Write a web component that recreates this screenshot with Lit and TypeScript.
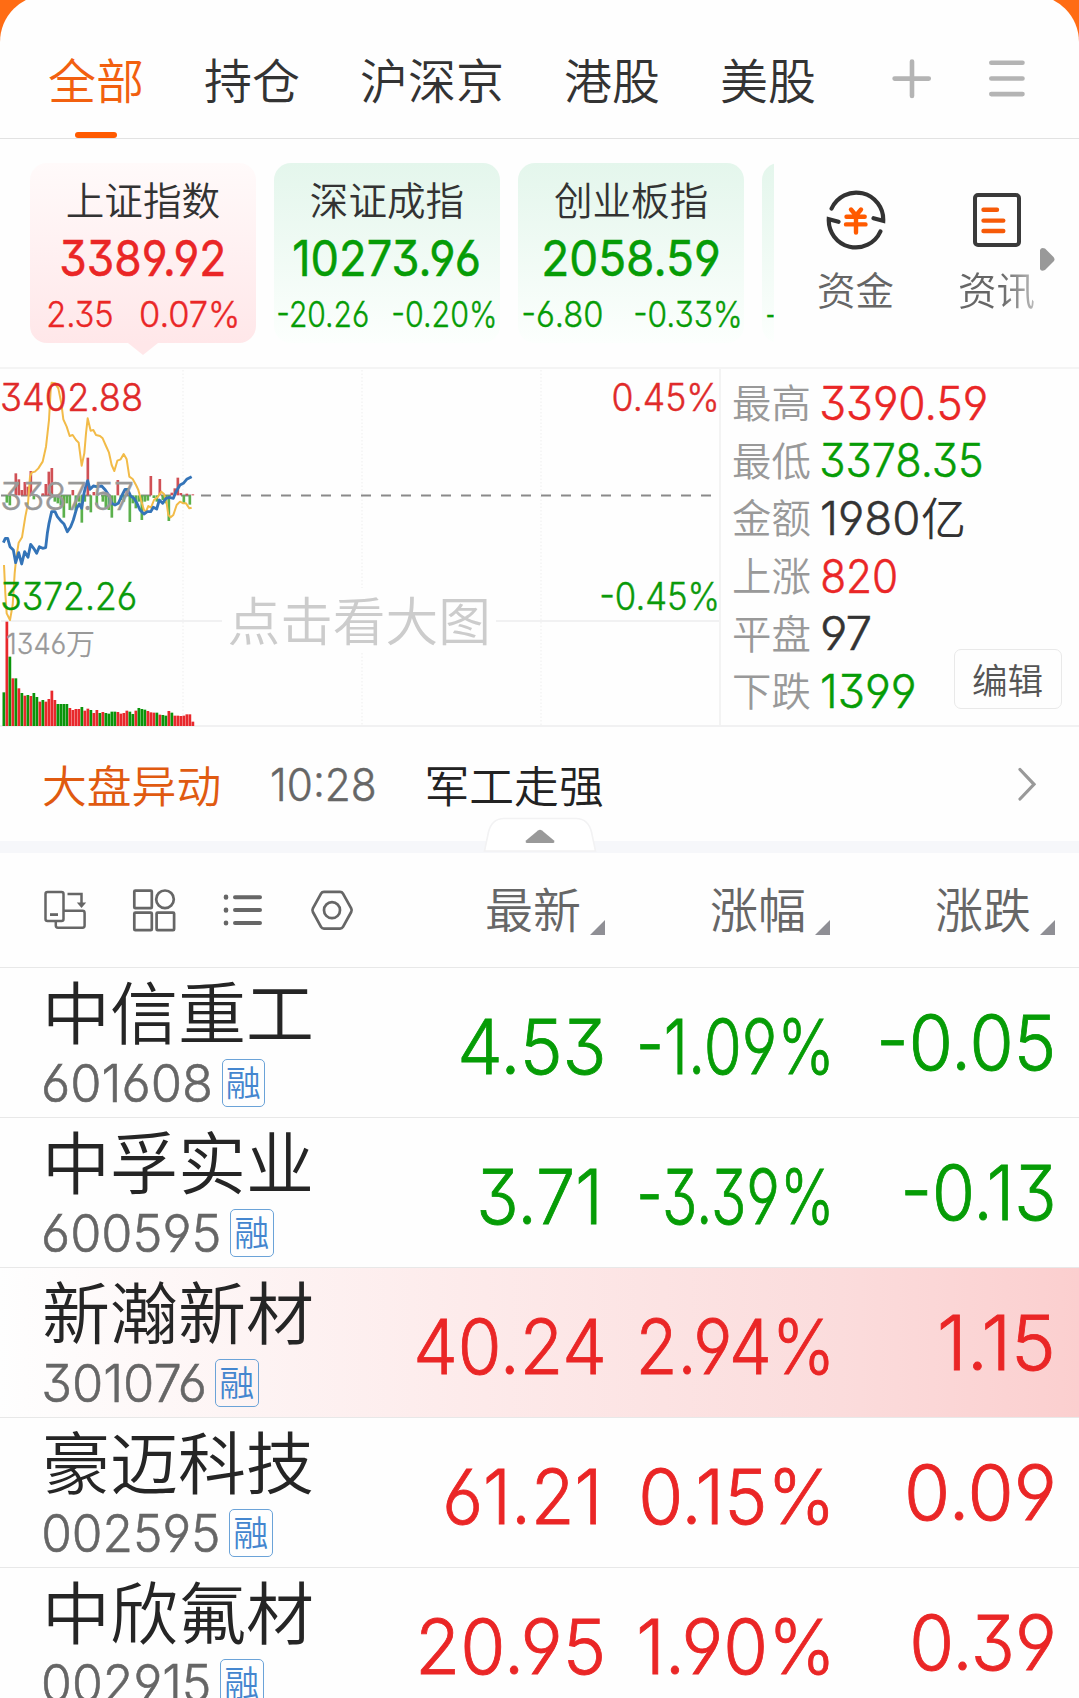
import { LitElement, html, svg, css } from "lit";
import { customElement, property } from "lit/decorators.js";
import { classMap } from "lit/directives/class-map.js";

const DIGIT_FONT = 'Inter, "Noto Sans CJK SC", sans-serif';
const DIGIT_RATIO = 0.727;

let ctx: CanvasRenderingContext2D | null = null;
function measure(text: string, size: number, weight: number) {
  if (!ctx) ctx = document.createElement("canvas").getContext("2d");
  ctx!.font = `${weight} ${size}px ${DIGIT_FONT}`;
  const m = ctx!.measureText(text);
  return { left: m.actualBoundingBoxLeft, ink: m.actualBoundingBoxLeft + m.actualBoundingBoxRight, advance: m.width };
}

/** Figures set to an exact ink width; `h` is the height of a digit. A thin outline gives the in-between weight. */
function figure(text: string, x: number, base: number, w: number, h: number, weight = 300, fill = "currentColor") {
  const size = h / DIGIT_RATIO;
  const m = measure(text, size, weight);
  const s = w / m.ink;
  return svg`<text class="fig" x=${x + m.left * s} y=${base} textLength=${m.advance * s}
    lengthAdjust="spacingAndGlyphs" font-size=${size} font-weight=${weight} fill=${fill}
    stroke=${fill} stroke-width=${size * 0.011}>${text}</text>`;
}

const figStyles = css`
  .fig {
    font-family: Inter, "Noto Sans CJK SC", sans-serif;
    font-feature-settings: "cv03", "cv04", "cv09";
  }
`;

const RED = "#e02a2a";
const GREEN = "#0a9a0a";

@customElement("fit-figure")
class FitFigure extends LitElement {
  @property() text = "";
  @property({ type: Number }) w = 0;
  @property({ type: Number }) h = 0;
  @property({ type: Number }) weight = 300;

  static styles = [
    figStyles,
    css`
      :host { display: block; flex: none; }
      svg { display: block; overflow: visible; }
    `,
  ];

  render() {
    return html`<svg width=${this.w} height=${this.h}>
      ${figure(this.text, 0, this.h, this.w, this.h, this.weight)}
    </svg>`;
  }
}

interface Index {
  name: string;
  value: string; vw: number;
  diff: string; dw: number;
  pct: string; pw: number;
  up?: boolean;
}

const INDICES: Index[] = [
  { name: "上证指数", value: "3389.92", vw: 163, diff: "2.35", dw: 64, pct: "0.07%", pw: 96.5, up: true },
  { name: "深证成指", value: "10273.96", vw: 185, diff: "-20.26", dw: 89.5, pct: "-0.20%", pw: 102 },
  { name: "创业板指", value: "2058.59", vw: 174.5, diff: "-6.80", dw: 79, pct: "-0.33%", pw: 105 },
];

const STATS = [
  { label: "最高", value: "3390.59", w: 163.5, tone: "up" },
  { label: "最低", value: "3378.35", w: 159.5, tone: "down" },
  { label: "金额", value: "1980", w: 96, tone: "flat", unit: "亿" },
  { label: "上涨", value: "820", w: 74, tone: "up" },
  { label: "平盘", value: "97", w: 48.5, tone: "flat" },
  { label: "下跌", value: "1399", w: 92, tone: "down" },
];

const STOCKS = [
  { name: "中信重工", code: "601608", cw: 166.5, price: "4.53", w: 141, pct: "-1.09%", pw: 188.5, chg: "-0.05", gw: 171.5 },
  { name: "中孚实业", code: "600595", cw: 175, price: "3.71", w: 115.5, pct: "-3.39%", pw: 188.5, chg: "-0.13", gw: 147 },
  { name: "新瀚新材", code: "301076", cw: 160, price: "40.24", w: 185.5, pct: "2.94%", pw: 187.5, chg: "1.15", gw: 111, up: true, flash: true },
  { name: "豪迈科技", code: "002595", cw: 174, price: "61.21", w: 150, pct: "0.15%", pw: 186, chg: "0.09", gw: 144.5, up: true },
  { name: "中欣氟材", code: "002915", cw: 165, price: "20.95", w: 181.5, pct: "1.90%", pw: 188.5, chg: "0.39", gw: 139.5, up: true },
];

/* Intraday series, in thirds of a pixel from the top left of the chart. */
const VOL_TOPS = [
  997, 785, 890, 955, 955, 985, 999, 1007, 1005, 1008, 999, 1011, 1025, 1020, 1025, 1017, 992, 1020, 1032, 1032, 1032,
  1032, 1044, 1050, 1047, 1047, 1041, 1052, 1046, 1050, 1059, 1050, 1059, 1056, 1059, 1061, 1055, 1055, 1056, 1061,
  1059, 1052, 1055, 1062, 1052, 1044, 1047, 1049, 1053, 1057, 1058, 1058, 1064, 1065, 1067, 1053, 1058, 1067, 1067,
  1068, 1067, 1063, 1063, 1085,
];
const VOL_SIDE = "grgrgrgrgrggrgrrrrggggrrrrgrrgrrgrggggrrrrggrgggrrrgrggrgrrrrrrr";

const MOMENTUM: [number, number][] = [
  [1, 428], [2, 436], [4, 340], [5, 358], [6, 390], [7, 366], [8, 380], [9, 333], [10, 418], [13, 400], [14, 372],
  [15, 335], [16, 324], [17, 425], [18, 430], [19, 437], [20, 473], [21, 430], [22, 450], [23, 390], [24, 452],
  [25, 425], [26, 488], [27, 425], [28, 293], [29, 457], [30, 396], [31, 435], [33, 425], [34, 447], [35, 450],
  [36, 473], [37, 430], [38, 360], [39, 420], [40, 425], [41, 385], [42, 486], [43, 430], [44, 445], [45, 425],
  [46, 480], [47, 425], [48, 422], [49, 348], [50, 414], [51, 425], [52, 357], [53, 420], [54, 430], [55, 483],
  [56, 398], [57, 385], [58, 353], [59, 399], [60, 432], [61, 401], [62, 434], [63, 403],
];

const AVG_LINE =
  "12,615 16,700 20,760 30,780 38,735 44,640 48,600 56,548 66,532 76,470 84,430 90,350 95,338 105,335 115,325 128,305 138,260 147,180 152,90 155,68 165,70 175,85 184,130 190,178 200,200 209,228 218,225 228,240 236,248 245,317 253,280 258,220 263,175 272,212 280,210 288,225 300,228 308,235 318,258 327,278 335,315 343,333 352,302 362,298 371,282 380,298 388,350 398,357 408,375 415,390 423,420 432,450 438,455 445,438 453,443 462,420 474,410 484,395 492,402 500,430 505,465 512,472 520,465 530,435 540,425 550,430 558,430 568,445 575,443";
const PRICE_LINE =
  "10,548 16,535 23,535 30,560 40,570 47,608 56,578 65,612 74,575 84,592 92,553 101,565 110,580 118,560 128,565 137,563 142,520 147,490 155,455 165,455 172,470 182,482 192,492 202,515 212,500 220,480 230,445 238,432 245,445 252,400 258,375 263,362 270,388 280,378 290,380 305,378 316,390 326,405 335,430 345,435 355,430 365,408 375,388 383,388 392,408 402,415 410,428 420,450 432,462 442,455 452,455 460,442 470,447 478,420 488,430 498,415 508,412 520,415 528,395 540,375 550,370 560,358 575,350";

@customElement("trend-chart")
class TrendChart extends LitElement {
  static styles = [
    figStyles,
    css`
      :host { display: block; width: 719px; flex: none; }
      svg { display: block; overflow: visible; }
      .cjk { font-family: "Noto Sans CJK SC", sans-serif; font-weight: 350; }
    `,
  ];

  render() {
    return html`<svg width="719" height="356" viewBox="0 369 719 356">
      <g fill="none" stroke="#f1f1f2" stroke-width="2">
        <path d="M1 621H222M496 621H720" />
        <path d="M183 370V725M362 370V588M362 653V725M541 370V725" stroke="#f3f3f3" stroke-width="1.4" stroke-dasharray="1.5 2" />
      </g>
      <path d="M1 495.5H715" stroke="#8a8a8a" stroke-width="2" stroke-dasharray="10 10" />
      <g transform="translate(0 360) scale(0.33333)">
        ${MOMENTUM.map(([i, y]) =>
          y < 406
            ? svg`<rect x=${7.5 + 9 * i} y=${y} width="8" height=${406 - y} fill="#d05055" />`
            : svg`<rect x=${7.5 + 9 * i} y="406" width="8" height=${y - 406} fill="#5bb04c" />`,
        )}
        ${VOL_TOPS.map(
          (y, i) =>
            svg`<rect x=${7.5 + 9 * i} y=${y} width="8.2" height=${1098 - y} fill=${VOL_SIDE[i] === "r" ? "#e8282c" : "#0a940a"} />`,
        )}
        <polyline points=${AVG_LINE} fill="none" stroke="#f2bb48" stroke-width="6" stroke-linejoin="round" />
        <polyline points=${PRICE_LINE} fill="none" stroke="#3474b8" stroke-width="8.5" stroke-linejoin="round" />
      </g>
      ${figure("3402.88", 2, 411, 139, 27.5, 300, RED)}
      ${figure("0.45%", 613.5, 411, 103, 27.5, 300, RED)}
      ${figure("3387.57", 2, 510, 131, 27.5, 300, "#999")}
      ${figure("3372.26", 2, 610, 133.5, 27.5, 300, GREEN)}
      ${figure("-0.45%", 601, 610, 116, 27.5, 300, GREEN)}
      ${figure("1346", 7, 654, 58, 21, 300, "#999")}
      <text class="cjk" x="66" y="654.5" font-size="29" fill="#999">万</text>
      <text class="cjk" x="227.5" y="641" font-size="52.7" fill="#ccc">点击看大图</text>
    </svg>`;
  }
}

@customElement("app-root")
class AppRoot extends LitElement {
  static styles = css`
    :host {
      display: block;
      width: 1079px;
      height: 1698px;
      overflow: hidden;
      background: #ff6c14;
      font-family: "Noto Sans CJK SC", sans-serif;
      font-weight: 350;
      color: #333;
    }
    * { box-sizing: border-box; }
    svg { display: block; flex: none; }
    .page {
      margin-top: -5px;
      padding-top: 5px;
      height: 1703px;
      background: #fefefe;
      border-radius: 47px 47px 0 0;
      overflow: hidden;
    }
    .up { color: #ea2626; }
    .down { color: #069c06; }
    .flat { color: #333; }

    .tabs { display: flex; height: 139px; border-bottom: 1px solid #e2e2e2; padding-left: 48px; }
    .names { display: flex; gap: 60px; font-size: 48px; line-height: 157px; }
    .tab { height: 138px; display: flex; flex-direction: column; align-items: center; }
    .tab.on { color: #f2600f; }
    .tab.on::after { content: ""; width: 42px; height: 6px; border-radius: 3px; background: #ff5a00; margin-top: -25px; flex: none; }
    .add { margin: 57px 0 0 73.5px; }
    .menu { margin: 57px 0 0 53px; }

    .indices { display: flex; height: 230px; padding: 24px 0 0 30px; border-bottom: 2px solid #f4f4f4; }
    .cards { display: flex; gap: 18.3px; width: 744px; overflow: hidden; }
    .card { flex: none; width: 225.8px; height: 180px; border-radius: 17px; background: linear-gradient(#e4f6ec, #fcfffd); display: flex; flex-direction: column; align-items: center; }
    .cell { flex: none; display: flex; flex-direction: column; align-items: center; height: 193px; }
    .cell.hot .card { background: linear-gradient(#fffafa, #ffe7e9); }
    .cell.hot::after { content: ""; border: solid transparent; border-width: 12px 15px 0; border-top-color: #ffe7e9; }
    .title { font-size: 38.6px; line-height: 71px; color: #333; height: 77px; }
    .pair { display: flex; justify-content: space-between; width: 219px; margin-top: 25px; padding: 0 1px 0 1px; }
    .hot .pair { width: 189px; padding: 0; }
    .quick { display: flex; padding-left: 43px; gap: 64px; }
    .link { display: flex; flex-direction: column; align-items: center; width: 77px; font-size: 38.5px; line-height: 56px; color: #666; padding-top: 26px; }
    .link svg { margin-bottom: 9px; }
    .fade { background: linear-gradient(90deg, #666 55%, #bbb); -webkit-background-clip: text; background-clip: text; color: transparent; }
    .more { margin: 83.5px 0 0 4px; }

    .market { display: flex; height: 358px; border-bottom: 2px solid #f1f1f2; }
    .stats { position: relative; flex: 1; border-left: 2px solid #f3f3f3; padding: 6px 0 0 11px; }
    .stat { display: flex; height: 57.7px; }
    .label { width: 90px; font-size: 39.4px; line-height: 51px; color: #999; }
    .stat fit-figure { margin-top: 10.5px; }
    .unit { font-size: 45px; line-height: 54px; margin-left: 3px; }
    .edit { position: absolute; left: 232.5px; top: 280px; width: 108px; height: 60px; border: 1.4px solid #e9e9e9; border-radius: 7px; background: #fefefe; font-size: 35.6px; line-height: 57px; text-align: center; color: #555; }

    .news { display: flex; height: 114px; padding: 0 43px 0 42px; font-size: 44.8px; line-height: 113px; color: #222; }
    .topic { color: #e05a10; width: 229.5px; }
    .news fit-figure { margin: 41.3px 50.5px 0 0; color: #666; }
    .chev { margin: 39px 0 0 auto; }
    .strip { position: relative; height: 12px; background: #f6f7fa; }
    .handle { position: absolute; left: 481.5px; top: -25px; }

    .head { display: flex; height: 115px; border-bottom: 1px solid #e8e8e8; padding: 0 24px 0 43px; color: #666; }
    .tools { display: flex; gap: 45px; padding-top: 35px; }
    .cols { display: flex; gap: 105px; margin-left: auto; font-size: 48px; line-height: 109px; }
    .col { display: flex; justify-content: space-between; width: 120px; }
    .col svg { margin-top: 67px; }

    .row { display: grid; grid-template-columns: 300px 258px 226px 224px; padding-left: 44px; height: 150px; border-bottom: 1px solid #e8e8e8; }
    .row.flash { background: linear-gradient(90deg, #fefefe 0%, #fdeaea 45%, #fbdcdc 78%, #fbcfcf 100%); }
    .name { font-size: 68px; line-height: 84px; height: 91px; margin-left: -2px; color: #252525; white-space: nowrap; }
    .code { display: flex; color: #666; gap: 11px; }
    .code fit-figure { margin-top: 5px; }
    .badge { width: 43.5px; height: 47.5px; border: 1.4px solid #6ba3d8; border-radius: 5px; font-size: 35px; line-height: 42px; text-align: center; color: #4486cf; }
    .num { display: flex; justify-content: flex-end; padding-top: 51px; }
    .num.last { padding-top: 46.5px; }
    .num.one { padding-right: 6px; }
    .peek { margin-top: 36px; }
  `;

  private link(icon: unknown, label: string, fade = false) {
    return html`<div class="link">${icon}<span class=${classMap({ fade })}>${label}</span></div>`;
  }

  render() {
    return html`<div class="page">
      <nav class="tabs">
        <div class="names">
          ${["全部", "持仓", "沪深京", "港股", "美股"].map(
            (t, i) => html`<div class=${classMap({ tab: true, on: i === 0 })}>${t}</div>`,
          )}
        </div>
        <svg class="add" width="44" height="44" fill="none" stroke="#b4b4b4" stroke-width="4.6" stroke-linecap="round">
          <path d="M22 4.5V39M4.6 21.6H38.8" />
        </svg>
        <svg class="menu" width="44" height="44" fill="none" stroke="#b4b4b4" stroke-width="4.6" stroke-linecap="round">
          <path d="M4.3 5.7H35.5M4.3 21.5H35.5M4.3 37.1H35.5" />
        </svg>
      </nav>

      <section class="indices">
        <div class="cards">
          ${INDICES.map(
            (x) => html`<div class=${classMap({ cell: true, hot: !!x.up })}>
              <div class=${classMap({ card: true, up: !!x.up, down: !x.up })}>
                <div class="title">${x.name}</div>
                <fit-figure .text=${x.value} .w=${x.vw} .h=${35.5} .weight=${400}></fit-figure>
                <div class="pair">
                  <fit-figure .text=${x.diff} .w=${x.dw} .h=${25.5}></fit-figure>
                  <fit-figure .text=${x.pct} .w=${x.pw} .h=${25.5}></fit-figure>
                </div>
              </div>
            </div>`,
          )}
          <div class="cell">
            <div class="card down">
              <div class="title"></div>
              <div class="pair peek"></div>
              <div class="pair"><fit-figure .text=${"-"} .w=${7} .h=${25.5}></fit-figure></div>
            </div>
          </div>
        </div>
        <div class="quick">
          ${this.link(
            html`<svg width="62" height="62" viewBox="-31 -31 62 62" fill="none" stroke="#333" stroke-width="4.2">
              <path d="M-24.4 -11.5A27 27 0 0 1 27.2 0.8L17.5 -1.8" stroke-linecap="round" />
              <path d="M24.4 11.5A27 27 0 0 1 -27.2 -0.8L-17.5 1.8" stroke-linecap="round" />
              <path d="M-5 -10.5L0 -4.5L5 -10.5M-9.5 -3.3H8.7M-10 4.4H9.5M0 -4V12.5" stroke="#ff5a00" stroke-width="4.4" stroke-linecap="round" />
            </svg>`,
            "资金",
          )}
          ${this.link(
            html`<svg width="62" height="62" viewBox="-31 -31 62 62" fill="none">
              <rect x="-22" y="-25" width="44" height="50" rx="3" stroke="#3a3a3a" stroke-width="4" />
              <path d="M-13.5 -10.2H0M-13.5 0.6H6.3M-13.5 11H6.3" stroke="#f65a08" stroke-width="4.4" stroke-linecap="round" />
            </svg>`,
            "资讯",
            true,
          )}
        </div>
        <svg class="more" width="18" height="26">
          <path d="M1 3Q2 0 6 1.5L14.5 10Q16.5 12.5 14.5 14.5L6 23Q2 25 1 22Z" fill="#999" />
        </svg>
      </section>

      <section class="market">
        <trend-chart></trend-chart>
        <div class="stats">
          ${STATS.map(
            (s) => html`<div class="stat">
              <span class="label">${s.label}</span>
              <fit-figure class=${s.tone} .text=${s.value} .w=${s.w} .h=${33.5}></fit-figure>
              ${s.unit ? html`<span class="unit">${s.unit}</span>` : ""}
            </div>`,
          )}
          <div class="edit">编辑</div>
        </div>
      </section>

      <section class="news">
        <span class="topic">大盘异动</span>
        <fit-figure .text=${"10:28"} .w=${102.5} .h=${32.5}></fit-figure>
        <span>军工走强</span>
        <svg class="chev" width="20" height="38" fill="none" stroke="#999" stroke-width="3.2" stroke-linecap="round">
          <path d="M4 3.5L18 18.3L4 33" />
        </svg>
      </section>

      <div class="strip">
        <svg class="handle" width="116" height="40">
          <path d="M2.5 35L6.5 16Q10 2.5 22 2.5H94Q106 2.5 109.5 16L113.5 35Z" fill="#fff" stroke="#f2f2f3" stroke-width="1.6" />
          <path d="M44 24.5L56 14.5Q58 13 60 14.5L72 24.5Q73 27 71 27H45Q43 27 44 24.5Z" fill="#999" />
        </svg>
      </div>

      <section class="head">
        <div class="tools">
          <svg width="44" height="44" fill="none" stroke="#666" stroke-width="2.5">
            <rect x="2.5" y="4" width="18" height="29" rx="2" />
            <path d="M7 26.6H15" stroke-width="2.8" />
            <path d="M24.5 6H38.5V16" />
            <path d="M33.8 14.6H43.2L38.5 20Z" fill="#666" stroke="none" />
            <path d="M21 22.8H39.5Q41.6 22.8 41.6 25V37.5Q41.6 39.7 39.5 39.7H15Q12.8 39.7 12.8 37.5V33" />
          </svg>
          <svg width="44" height="44" fill="none" stroke="#666" stroke-width="2.7">
            <rect x="2.3" y="2.6" width="17.5" height="17.6" rx="1" />
            <circle cx="33" cy="11.3" r="8.8" />
            <rect x="2.3" y="24.6" width="17.5" height="17.6" rx="1" />
            <rect x="24.6" y="24.6" width="17.5" height="17.6" rx="1" />
          </svg>
          <svg width="44" height="44" fill="none" stroke="#666" stroke-width="4" stroke-linecap="round">
            <path d="M14 9.2H39M14 22.1H39M14 35H39" />
            <path d="M5 8.9V9.5M5 21.8V22.4M5 34.7V35.3" stroke-width="4.6" />
          </svg>
          <svg width="44" height="44" fill="none" stroke="#666" stroke-width="2.7">
            <path d="M14 3.8H30Q32 3.8 33 5.6L41.2 20.3Q42.2 22.2 41.2 24L33 38.8Q32 40.6 30 40.6H14Q12 40.6 11 38.8L2.9 24Q1.9 22.2 2.9 20.3L11 5.6Q12 3.8 14 3.8Z" />
            <circle cx="22" cy="22.2" r="8" />
          </svg>
        </div>
        <div class="cols">
          ${["最新", "涨幅", "涨跌"].map(
            (c) => html`<div class="col">
              <span>${c}</span>
              <svg width="15" height="15"><path d="M15 0V15H0Z" fill="#8f8f95" /></svg>
            </div>`,
          )}
        </div>
      </section>

      ${STOCKS.map((s) => {
        const tone = s.up ? "up" : "down";
        return html`<div class=${classMap({ row: true, flash: !!s.flash })}>
          <div>
            <div class="name">${s.name}</div>
            <div class="code">
              <fit-figure .text=${s.code} .w=${s.cw} .h=${37.5}></fit-figure>
              <span class="badge">融</span>
            </div>
          </div>
          <div class=${classMap({ num: true, [tone]: true, one: s.price.endsWith("1") })}>
            <fit-figure .text=${s.price} .w=${s.w} .h=${55}></fit-figure>
          </div>
          <div class="num ${tone}"><fit-figure .text=${s.pct} .w=${s.pw} .h=${55}></fit-figure></div>
          <div class="num last ${tone}"><fit-figure .text=${s.chg} .w=${s.gw} .h=${55}></fit-figure></div>
        </div>`;
      })}
    </div>`;
  }
}
